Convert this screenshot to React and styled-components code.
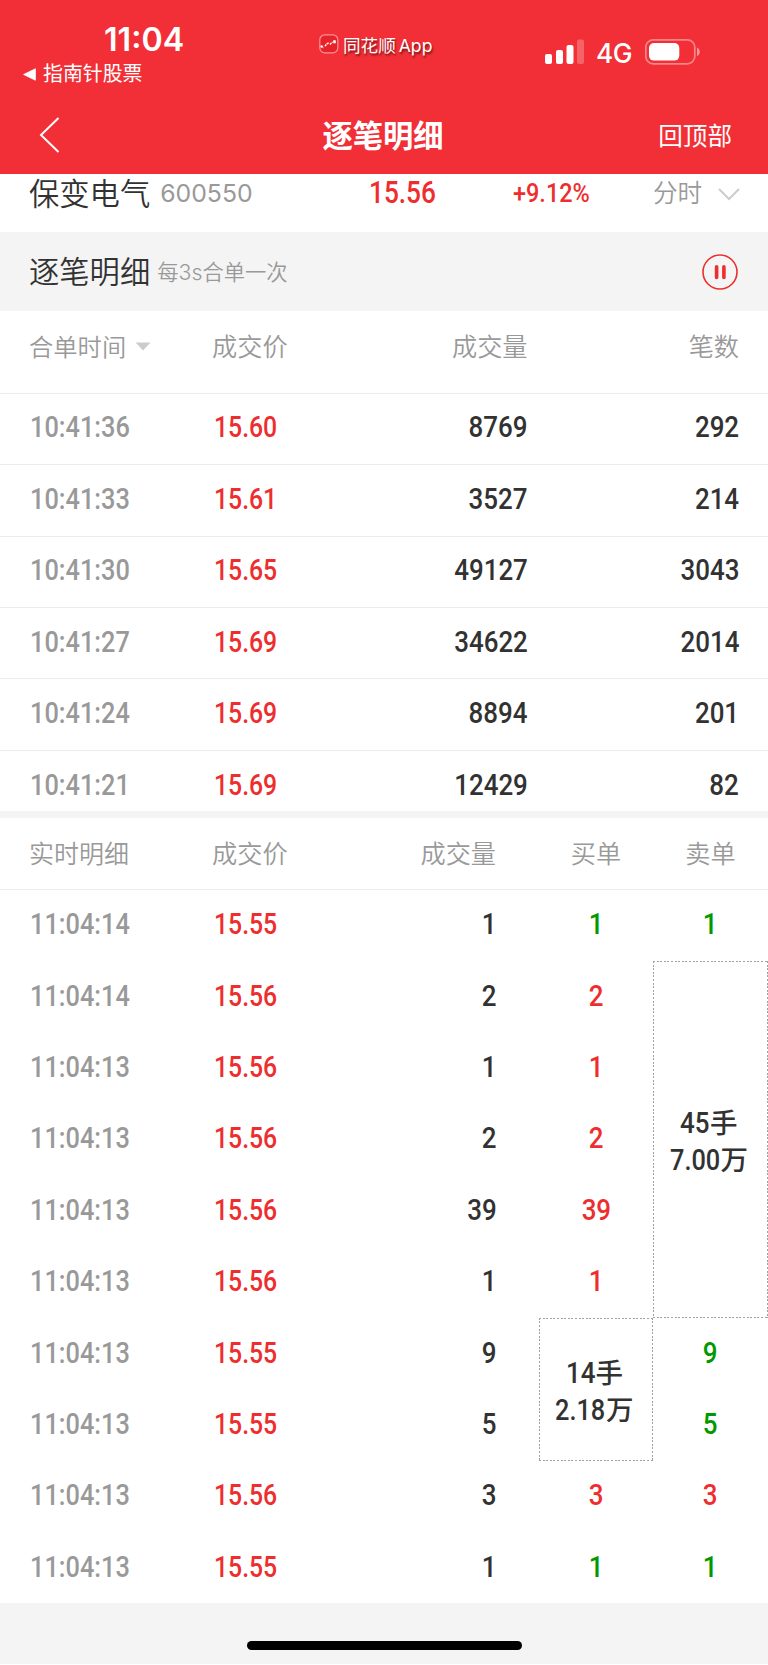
import React from 'react'
import styled, { createGlobalStyle } from 'styled-components';

const GlobalStyle = createGlobalStyle`
  * {
    box-sizing: border-box;
  }
  body {
    margin: 0;
    background: #fff;
    font-family: Inter, 'Noto Sans CJK SC', sans-serif;
    color: #323232;
  }
`;

const colors = {
  bar: '#f22f37',
  red: '#ee2e2e',
  green: '#009a00',
  dark: '#323232',
  grey: '#999',
  light: '#f4f4f4',
};

const Screen = styled.div`
  width: 768px;
  height: 1664px;
  display: flex;
  flex-direction: column;
  overflow: hidden;
  background: #fff;
`;

const Header = styled.header`
  height: 174.4px;
  flex: none;
  background: ${colors.bar};
  color: #fff;
`;

const StatusBar = styled.div`
  height: 95px;
  display: grid;
  grid-template-columns: 318px 216px 1fr;
`;

const StatusLeft = styled.div`
  padding: 20px 0 0 23px;
`;

const Clock = styled.div`
  padding-left: 81px;
  font-size: 32.2px;
  font-weight: 600;
  line-height: 39px;
`;

const BackApp = styled.div`
  display: flex;
  align-items: center;
  gap: 7px;
  font-size: 19.9px;
  line-height: 30px;
`;

const AppMark = styled.div`
  display: flex;
  align-items: flex-start;
  gap: 4px;
  padding: 34px 0 0 1px;
  font-size: 17.6px;
  line-height: 24px;
  white-space: nowrap;
  word-spacing: -2px;
  text-shadow: 1px 2px 2px rgba(60, 0, 0, 0.65);
`;

const StatusRight = styled.div`
  display: flex;
  align-items: flex-start;
  padding: 38px 0 0 11px;
`;

const Network = styled.span`
  width: 60px;
  flex: none;
  padding-left: 11px;
  font-size: 26.4px;
  font-weight: 500;
  line-height: 30px;
  letter-spacing: -0.6px;
`;

const NavBar = styled.div`
  height: 79.4px;
  display: grid;
  grid-template-columns: 200px 1fr 200px;
  align-items: center;
  padding: 1px 36px 0 39px;
`;

const Title = styled.h1`
  margin: 0;
  padding: 1px 5px 0 0;
  font-size: 30.3px;
  font-weight: 700;
  line-height: 40px;
  text-align: center;
`;

const TopLink = styled.span`
  padding-top: 1px;
  font-size: 24.6px;
  line-height: 36px;
  text-align: right;
`;

// narrow numerals, squeezed towards the side they are aligned to
const Num = styled.span`
  display: inline-block;
  font-family: Roboto, sans-serif;
  font-size: ${({ $size }) => $size || 28.8}px;
  font-weight: 500;
  color: ${({ $color }) => $color || 'inherit'};
  transform: scaleX(${({ $squeeze }) => $squeeze || 0.9});
  transform-origin: ${({ $origin }) => $origin || 'left'} center;
`;

const Quote = styled.div`
  height: 57.8px;
  flex: none;
  display: grid;
  grid-template-columns: 340px 144px 140px 1fr;
  align-items: start;
  padding-left: 29px;
  line-height: 38px;
`;

const StockName = styled.div`
  display: flex;
  font-size: 30.3px;
  font-weight: 350;
  line-height: 40px;
  white-space: nowrap;
`;

const StockCode = styled.span`
  margin-left: 10px;
  font-size: 24.8px;
  font-weight: 400;
  line-height: 39px;
  color: ${colors.grey};
`;

const Period = styled.div`
  display: flex;
  align-items: center;
  gap: 16px;
  font-size: 24.6px;
  font-weight: 350;
  line-height: 39px;
  color: ${colors.grey};
  white-space: nowrap;
`;

const SectionBar = styled.div`
  height: 78.6px;
  flex: none;
  display: flex;
  align-items: center;
  padding: 1px 30px 0 29px;
  background: ${colors.light};
`;

const SectionTitle = styled.h2`
  margin: 0;
  padding-bottom: 3px;
  font-size: 30.3px;
  font-weight: 350;
`;

const SectionNote = styled.span`
  flex: 1;
  margin-left: 7px;
  padding-bottom: 3px;
  font-size: 21.3px;
  font-weight: 350;
  color: ${colors.grey};
`;

const MergedList = styled.div`
  height: 500.2px;
  flex: none;
  overflow: hidden;
`;

const MergedRow = styled.div`
  height: ${({ $head }) => ($head ? 82.9 : 71.45)}px;
  display: grid;
  grid-template-columns: 183px 120px 195.5px 1fr;
  align-items: center;
  padding: 0 29px ${({ $head }) => ($head ? 13 : 3)}px 29px;
  border-bottom: 1px solid #ebebeb;
`;

const Label = styled.span`
  display: flex;
  align-items: center;
  justify-content: ${({ $align }) => $align || 'flex-start'};
  gap: 9px;
  font-size: ${({ $size }) => $size || 25.2}px;
  font-weight: 350;
  color: ${colors.grey};
  white-space: nowrap;

  svg {
    margin-top: 2px;
  }
`;

const Cell = styled.div`
  display: flex;
  align-items: center;
  justify-content: ${({ $align }) => $align || 'flex-start'};
  padding-left: ${({ $left }) => $left || 0}px;
`;

const Divider = styled.div`
  height: 7px;
  flex: none;
  background: ${colors.light};
`;

const liveColumns = `
  display: grid;
  grid-template-columns: 212px 150px 177px 114px 1fr;
`;

const LiveHead = styled.div`
  ${liveColumns}
  height: 71.6px;
  flex: none;
  align-items: center;
  border-bottom: 1px solid #ededed;
`;

const LiveGrid = styled.div`
  ${liveColumns}
  grid-template-rows: repeat(10, 71.4px);
  flex: none;
`;

const LiveCell = styled.div`
  grid-column: ${({ $col }) => $col};
  grid-row: ${({ $row }) => $row};
  display: flex;
  align-items: center;
  justify-content: ${({ $align }) => $align || 'flex-start'};
  padding: 0 ${({ $right }) => $right || 0}px 2px ${({ $left }) => $left || 0}px;
`;

const dots = (angle) => `repeating-linear-gradient(${angle}, #a0a0a0 0 2px, transparent 2px 3.6px)`;

const OrderBox = styled.div`
  grid-column: ${({ $col }) => $col};
  grid-row: ${({ $row }) => $row} / span ${({ $span }) => $span};
  display: flex;
  flex-direction: column;
  align-items: center;
  justify-content: center;
  padding: 6px 3px 0 0;
  background:
    ${dots('90deg')} top / 100% 1px no-repeat,
    ${dots('90deg')} bottom / 100% 1px no-repeat,
    ${dots('180deg')} left / 1px 100% no-repeat,
    ${dots('180deg')} right / 1px 100% no-repeat;
  font-size: 27.5px;
  font-weight: 500;
  line-height: 37px;
`;

const OrderLine = styled.div`
  display: flex;

  ${Num} {
    margin-right: ${({ $pull }) => -$pull}px;
  }
`;

const Footer = styled.footer`
  flex: 1;
  display: flex;
  justify-content: center;
  padding-top: 37.5px;
  background: ${colors.light};
`;

const HomeIndicator = styled.div`
  width: 275px;
  height: 9px;
  border-radius: 5px;
  background: #000;
`;

const merged = [
  ['10:41:36', '15.60', 8769, 292],
  ['10:41:33', '15.61', 3527, 214],
  ['10:41:30', '15.65', 49127, 3043],
  ['10:41:27', '15.69', 34622, 2014],
  ['10:41:24', '15.69', 8894, 201],
  ['10:41:21', '15.69', 12429, 82],
];

const live = [
  { time: '11:04:14', price: '15.55', volume: 1, buy: 1, sell: 1, color: colors.green },
  { time: '11:04:14', price: '15.56', volume: 2, buy: 2, color: colors.red },
  { time: '11:04:13', price: '15.56', volume: 1, buy: 1, color: colors.red },
  { time: '11:04:13', price: '15.56', volume: 2, buy: 2, color: colors.red },
  { time: '11:04:13', price: '15.56', volume: 39, buy: 39, color: colors.red },
  { time: '11:04:13', price: '15.56', volume: 1, buy: 1, color: colors.red },
  { time: '11:04:13', price: '15.55', volume: 9, sell: 9, color: colors.green },
  { time: '11:04:13', price: '15.55', volume: 5, sell: 5, color: colors.green },
  { time: '11:04:13', price: '15.56', volume: 3, buy: 3, sell: 3, color: colors.red },
  { time: '11:04:13', price: '15.55', volume: 1, buy: 1, sell: 1, color: colors.green },
];

const orders = [
  { col: 5, row: 2, span: 5, lots: '45', amount: '7.00' },
  { col: 4, row: 7, span: 2, lots: '14', amount: '2.18' },
];

const SignalIcon = () => (
  <svg width="40" height="26" viewBox="0 0 40 26" fill="#fff">
    <rect x="0" y="16" width="7" height="10" rx="2" />
    <rect x="11" y="12" width="7" height="14" rx="2" />
    <rect x="21.5" y="7" width="7" height="19" rx="2" />
    <rect x="32" y="1.5" width="7" height="24.5" rx="2" opacity="0.25" />
  </svg>
);

const BatteryIcon = () => (
  <svg width="56" height="27" viewBox="0 0 56 27">
    <rect x="0.8" y="1.8" width="49" height="24" rx="7.5" fill="none" stroke="#fff" strokeOpacity="0.42" strokeWidth="1.7" />
    <rect x="4" y="5" width="30.3" height="17.6" rx="5" fill="#fff" />
    <path d="M52 9.5c3.6 1.4 3.6 7.2 0 8.6z" fill="#fff" opacity="0.5" />
  </svg>
);

const AppLogo = () => (
  <svg width="20" height="20" viewBox="0 0 20 20">
    <rect x="0.8" y="0.8" width="18" height="18" rx="5" fill="#e82229" stroke="#fff" strokeOpacity="0.5" strokeWidth="1.2" />
    <path d="M2 12l2.5 1.8M6 12l2-2.2 1.8-1M11 10.5l2.5-2.5" fill="none" stroke="#fff" strokeWidth="1.5" strokeDasharray="2 0.8" />
    <path d="M14.2 6.2h2.6v3h-2.6zM1.6 11.4h2v2.2h-2z" fill="#fff" />
  </svg>
);

const Time = ({ children }) => (
  <Num $squeeze={0.88} $color={colors.grey}>{children}</Num>
);

const Price = ({ children }) => (
  <Num $squeeze={0.86} $color={colors.red}>{children}</Num>
);

const App = () => {
  return (
    <Screen>
      <GlobalStyle />
      <Header>
        <StatusBar>
          <StatusLeft>
            <Clock>11:04</Clock>
            <BackApp>
              <svg width="13" height="13" viewBox="0 0 13 13"><path d="M0.6 6.5L12.4 0.8v11.4z" fill="#fff" stroke="#fff" strokeWidth="0.8" strokeLinejoin="round" /></svg>
              指南针股票
            </BackApp>
          </StatusLeft>
          <AppMark>
            <AppLogo />
            <span>同花顺 App</span>
          </AppMark>
          <StatusRight>
            <SignalIcon />
            <Network>4G</Network>
            <BatteryIcon />
          </StatusRight>
        </StatusBar>
        <NavBar>
          <svg width="22" height="38" viewBox="0 0 22 38"><path d="M19.5 2L2 19l17.5 17" fill="none" stroke="#fff" strokeWidth="2" /></svg>
          <Title>逐笔明细</Title>
          <TopLink>回顶部</TopLink>
        </NavBar>
      </Header>

      <Quote>
        <StockName>
          保变电气
          <StockCode>600550</StockCode>
        </StockName>
        <Num $size={30.5} $squeeze={0.86} $color={colors.red}>15.56</Num>
        <Num $size={25.5} $squeeze={0.92} $color={colors.red}>+9.12%</Num>
        <Period>
          分时
          <svg width="22" height="14" viewBox="0 0 22 14"><path d="M1 2l10 10L21 2" fill="none" stroke="#ccc" strokeWidth="2" /></svg>
        </Period>
      </Quote>

      <SectionBar>
        <SectionTitle>逐笔明细</SectionTitle>
        <SectionNote>每3s合单一次</SectionNote>
        <svg width="36" height="36" viewBox="0 0 36 36">
          <circle cx="18" cy="18" r="17" fill="none" stroke={colors.red} strokeWidth="1.6" />
          <path d="M14.6 12.7v10.8M21.9 12.7v10.8" stroke={colors.red} strokeWidth="3.6" strokeLinecap="round" />
        </svg>
      </SectionBar>

      <MergedList>
        <MergedRow $head>
          <Label $size={24.3}>
            合单时间
            <svg width="16" height="9" viewBox="0 0 16 9"><path d="M0.5 0.5h15L8 8.5z" fill="#ccc" /></svg>
          </Label>
          <Label>成交价</Label>
          <Label $align="flex-end">成交量</Label>
          <Label $align="flex-end">笔数</Label>
        </MergedRow>
        {merged.map(([time, price, volume, count]) => (
          <MergedRow key={time}>
            <Cell $left={1}><Time>{time}</Time></Cell>
            <Cell $left={1.5}><Price>{price}</Price></Cell>
            <Cell $align="flex-end"><Num $origin="right">{volume}</Num></Cell>
            <Cell $align="flex-end"><Num $origin="right">{count}</Num></Cell>
          </MergedRow>
        ))}
      </MergedList>

      <Divider />

      <LiveHead>
        <LiveCell $left={29}><Label $size={25}>实时明细</Label></LiveCell>
        <LiveCell><Label>成交价</Label></LiveCell>
        <LiveCell $align="flex-end" $right={43}><Label>成交量</Label></LiveCell>
        <LiveCell $align="center"><Label>买单</Label></LiveCell>
        <LiveCell $align="center"><Label>卖单</Label></LiveCell>
      </LiveHead>
      <LiveGrid>
        {live.map((item, i) => (
          <React.Fragment key={i}>
            <LiveCell $col={1} $row={i + 1} $left={30}><Time>{item.time}</Time></LiveCell>
            <LiveCell $col={2} $row={i + 1} $left={1.5}><Price>{item.price}</Price></LiveCell>
            <LiveCell $col={3} $row={i + 1} $align="flex-end" $right={42.5}><Num $origin="right">{item.volume}</Num></LiveCell>
            {item.buy && <LiveCell $col={4} $row={i + 1} $align="center"><Num $origin="center" $color={item.color}>{item.buy}</Num></LiveCell>}
            {item.sell && <LiveCell $col={5} $row={i + 1} $align="center"><Num $origin="center" $color={item.color}>{item.sell}</Num></LiveCell>}
          </React.Fragment>
        ))}
        {orders.map((order) => (
          <OrderBox key={order.lots} $col={order.col} $row={order.row} $span={order.span}>
            <OrderLine $pull={3}><Num>{order.lots}</Num>手</OrderLine>
            <OrderLine $pull={6.5}><Num $squeeze={0.88}>{order.amount}</Num>万</OrderLine>
          </OrderBox>
        ))}
      </LiveGrid>

      <Footer>
        <HomeIndicator />
      </Footer>
    </Screen>
  )
}

export default App;
